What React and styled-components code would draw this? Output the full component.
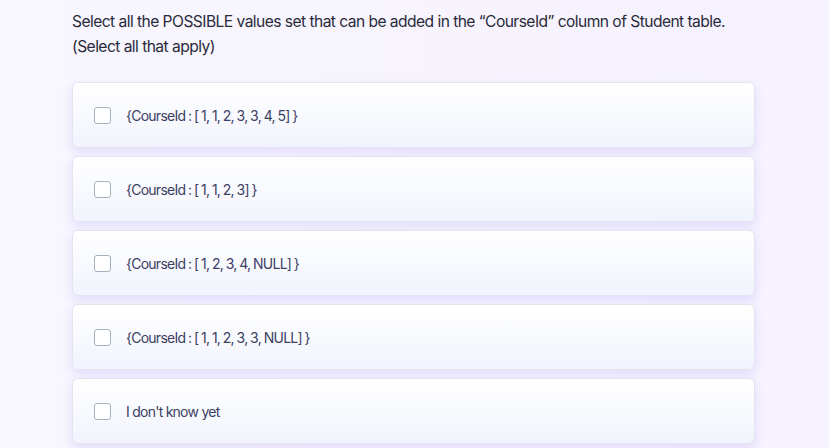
import React from 'react'
import styled, { createGlobalStyle } from 'styled-components'

const GlobalStyle = createGlobalStyle`
html, body {
    margin: 0;
    padding: 0;
    background: #f7f3fe;
}
body {
    font-family: Inter, "Noto Sans", sans-serif;
}
`;

export const Page = styled.div`
width: 829px;
height: 448px;
overflow: hidden;
box-sizing: border-box;
padding: 9px 74px 0 72px;
background: linear-gradient(90deg, #f8f6fe 0%, #f6f2fe 100%);
`;

export const Question = styled.p`
margin: 0 0 23px 0;
font-size: 15.6px;
line-height: 25px;
letter-spacing: -0.55px;
color: #2a2b3a;
`;

export const Options = styled.div`
display: flex;
flex-direction: column;
gap: 8px;
`;

export const Card = styled.label`
display: flex;
align-items: center;
gap: 15px;
height: 66px;
box-sizing: border-box;
padding: 0 22px 0 21px;
border: 1px solid #e6e3f0;
border-radius: 6px;
background: linear-gradient(180deg, #ffffff 0%, #f1f4fd 100%);
box-shadow: 0 4px 10px rgba(200, 190, 250, 0.45);
cursor: pointer;
`;

export const Box = styled.span`
width: 17px;
height: 17px;
box-sizing: border-box;
border: 1.5px solid #a7b2bf;
border-radius: 3px;
background: #fff;
flex-shrink: 0;
`;

export const OptionText = styled.span`
font-size: 14px;
letter-spacing: -0.75px;
word-spacing: ${(p) => (p.$code ? '-0.5px' : '0')};
color: #3c4063;
`;

const options = [
    '{CourseId : [ 1, 1, 2, 3, 3, 4, 5] }',
    '{CourseId : [ 1, 1, 2, 3] }',
    '{CourseId : [ 1, 2, 3, 4, NULL] }',
    '{CourseId : [ 1, 1, 2, 3, 3, NULL] }',
    "I don't know yet",
];

const App = () => {
    return (
        <Page>
            <GlobalStyle />
            <Question>
                Select all the POSSIBLE values set that can be added in the “CourseId” column of Student table.
                <br />
                (Select all that apply)
            </Question>
            <Options>
                {options.map((o) => (
                    <Card key={o}>
                        <Box />
                        <OptionText $code={o.startsWith('{')}>{o}</OptionText>
                    </Card>
                ))}
            </Options>
        </Page>
    );
};

export default App;
